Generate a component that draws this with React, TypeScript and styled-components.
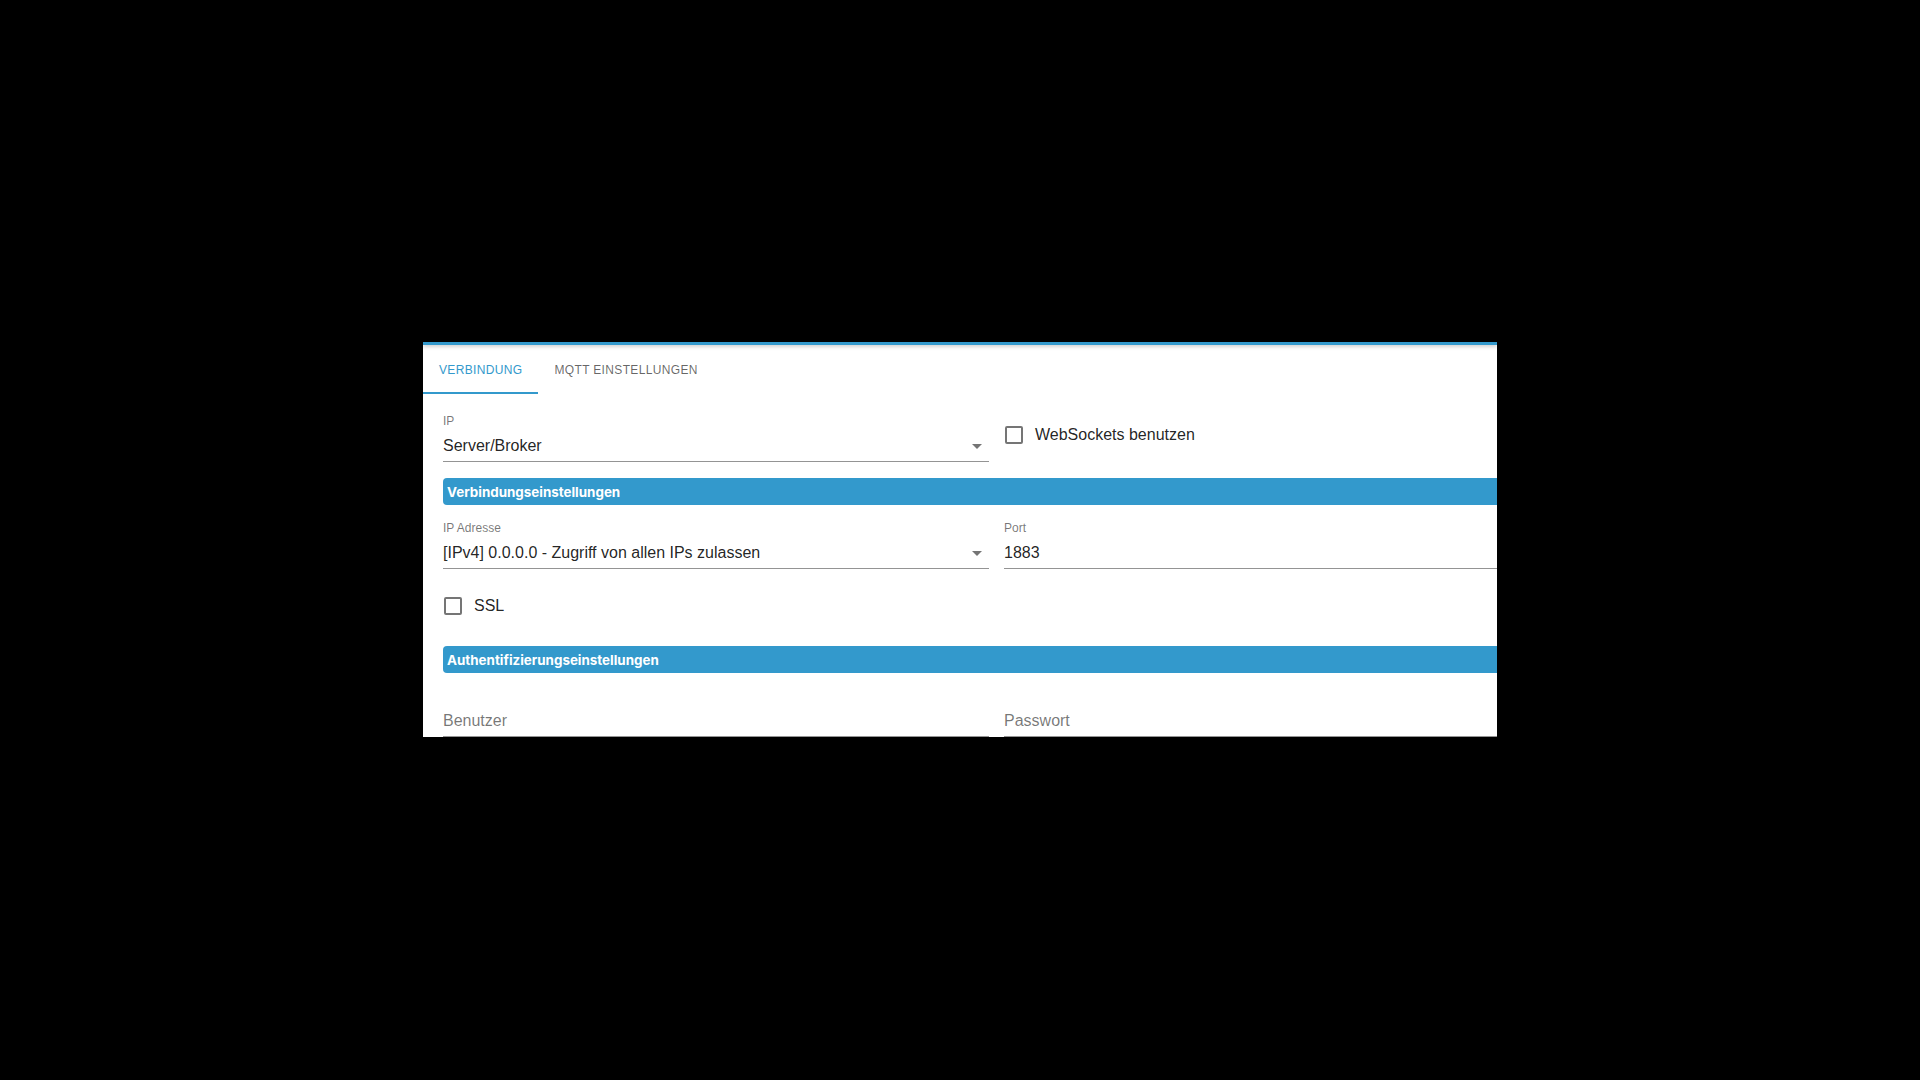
import React from 'react';
import styled, { createGlobalStyle } from 'styled-components';

const GlobalStyle = createGlobalStyle`
  html, body {
    margin: 0;
    padding: 0;
    background: #000;
  }
  body {
    font-family: "Liberation Sans", Arial, sans-serif;
  }
  * { box-sizing: border-box; }
`;

const BLUE = '#3399cc';

const Page = styled.div`
  width: 100vw;
  height: 100vh;
  padding-top: 342px;
  display: flex;
  justify-content: center;
  align-items: flex-start;
  background: #000;
`;

const Panel = styled.div`
  width: 1074px;
  height: 395px;
  background: #fff;
  overflow: hidden;
  display: flex;
  flex-direction: column;
`;

const TopBar = styled.div`
  height: 3px;
  flex-shrink: 0;
  background: ${BLUE};
  box-shadow: 0 1px 4px rgba(0, 0, 0, 0.3);
  position: relative;
  z-index: 1;
`;

const TabList = styled.div`
  display: flex;
  height: 49px;
  flex-shrink: 0;
`;

const Tab = styled.button<{ $active?: boolean }>`
  display: flex;
  align-items: center;
  height: 49px;
  padding: 2px 16px 0;
  margin: 0;
  border: 0;
  border-bottom: 2px solid ${(p) => (p.$active ? BLUE : 'transparent')};
  background: transparent;
  font-family: "Liberation Sans", Arial, sans-serif;
  font-size: 12px;
  font-weight: 500;
  letter-spacing: 0.02857em;
  text-transform: uppercase;
  color: ${(p) => (p.$active ? BLUE : 'rgba(0, 0, 0, 0.6)')};
  cursor: pointer;
`;

const Content = styled.div`
  display: flex;
  flex-direction: column;
  padding: 21px 0 0 20px;
  width: 1127px;
  flex-shrink: 0;
`;

const FieldRow = styled.div<{ $mt?: number }>`
  display: grid;
  grid-template-columns: 546px 546px;
  column-gap: 15px;
  align-items: start;
  margin-top: ${(p) => p.$mt ?? 0}px;
  flex-shrink: 0;
`;

const SectionHeader = styled.div<{ $mt: number }>`
  width: 1107px;
  height: 27px;
  margin-top: ${(p) => p.$mt}px;
  padding-left: 4px;
  display: flex;
  align-items: center;
  background: ${BLUE};
  border-radius: 4px;
  color: #fff;
  font-family: Inter, "Liberation Sans", sans-serif;
  font-size: 13.4px;
  font-weight: 700;
  flex-shrink: 0;
`;

const Field = styled.div`
  display: flex;
  flex-direction: column;
`;

const FieldLabel = styled.div`
  height: 14px;
  font-size: 12px;
  line-height: 13px;
  color: rgba(0, 0, 0, 0.54);
`;

const InputRow = styled.div<{ $placeholder?: boolean }>`
  display: flex;
  align-items: flex-start;
  padding: 7px 0 6px;
  border-bottom: 1px solid rgba(0, 0, 0, 0.42);
  font-size: 16px;
  line-height: 19px;
  color: ${(p) => (p.$placeholder ? 'rgba(0, 0, 0, 0.54)' : 'rgba(0, 0, 0, 0.87)')};
`;

const Value = styled.span`
  flex: 1;
  white-space: nowrap;
`;

const ArrowIcon = styled.svg`
  width: 24px;
  height: 24px;
  margin: -2px 0 -3px;
  flex-shrink: 0;
  fill: rgba(0, 0, 0, 0.54);
`;

const CheckLabel = styled.label<{ $mt?: number }>`
  display: flex;
  align-items: center;
  height: 42px;
  margin-top: ${(p) => p.$mt ?? 0}px;
  font-size: 16px;
  color: rgba(0, 0, 0, 0.87);
  cursor: pointer;
`;

const CheckBox = styled.span`
  width: 18px;
  height: 18px;
  margin: 0 12px 0 1px;
  border: 2px solid rgba(0, 0, 0, 0.54);
  border-radius: 2px;
  flex-shrink: 0;
`;

function SelectField({ label, value }: { label: string; value: string }) {
  return (
    <Field>
      <FieldLabel>{label}</FieldLabel>
      <InputRow>
        <Value>{value}</Value>
        <ArrowIcon viewBox="0 0 24 24">
          <path d="M7 10l5 5 5-5z" />
        </ArrowIcon>
      </InputRow>
    </Field>
  );
}

function TextField({ label, value, placeholder }: { label?: string; value?: string; placeholder?: string }) {
  return (
    <Field>
      <FieldLabel>{label ?? ''}</FieldLabel>
      <InputRow $placeholder={!value}>
        <Value>{value ?? placeholder}</Value>
      </InputRow>
    </Field>
  );
}

function CheckField({ label, mt }: { label: string; mt?: number }) {
  return (
    <CheckLabel $mt={mt}>
      <CheckBox />
      {label}
    </CheckLabel>
  );
}

export default function App() {
  return (
    <>
      <GlobalStyle />
      <Page>
        <Panel>
          <TopBar />
          <TabList>
            <Tab $active>Verbindung</Tab>
            <Tab>MQTT Einstellungen</Tab>
          </TabList>
          <Content>
            <FieldRow>
              <SelectField label="IP" value="Server/Broker" />
              <CheckField label="WebSockets benutzen" mt={-1} />
            </FieldRow>
            <SectionHeader $mt={16}>Verbindungseinstellungen</SectionHeader>
            <FieldRow $mt={17}>
              <SelectField label="IP Adresse" value="[IPv4] 0.0.0.0 - Zugriff von allen IPs zulassen" />
              <TextField label="Port" value="1883" />
            </FieldRow>
            <CheckField label="SSL" mt={16} />
            <SectionHeader $mt={19}>Authentifizierungseinstellungen</SectionHeader>
            <FieldRow $mt={17}>
              <TextField placeholder="Benutzer" />
              <TextField placeholder="Passwort" />
            </FieldRow>
          </Content>
        </Panel>
      </Page>
    </>
  );
}
